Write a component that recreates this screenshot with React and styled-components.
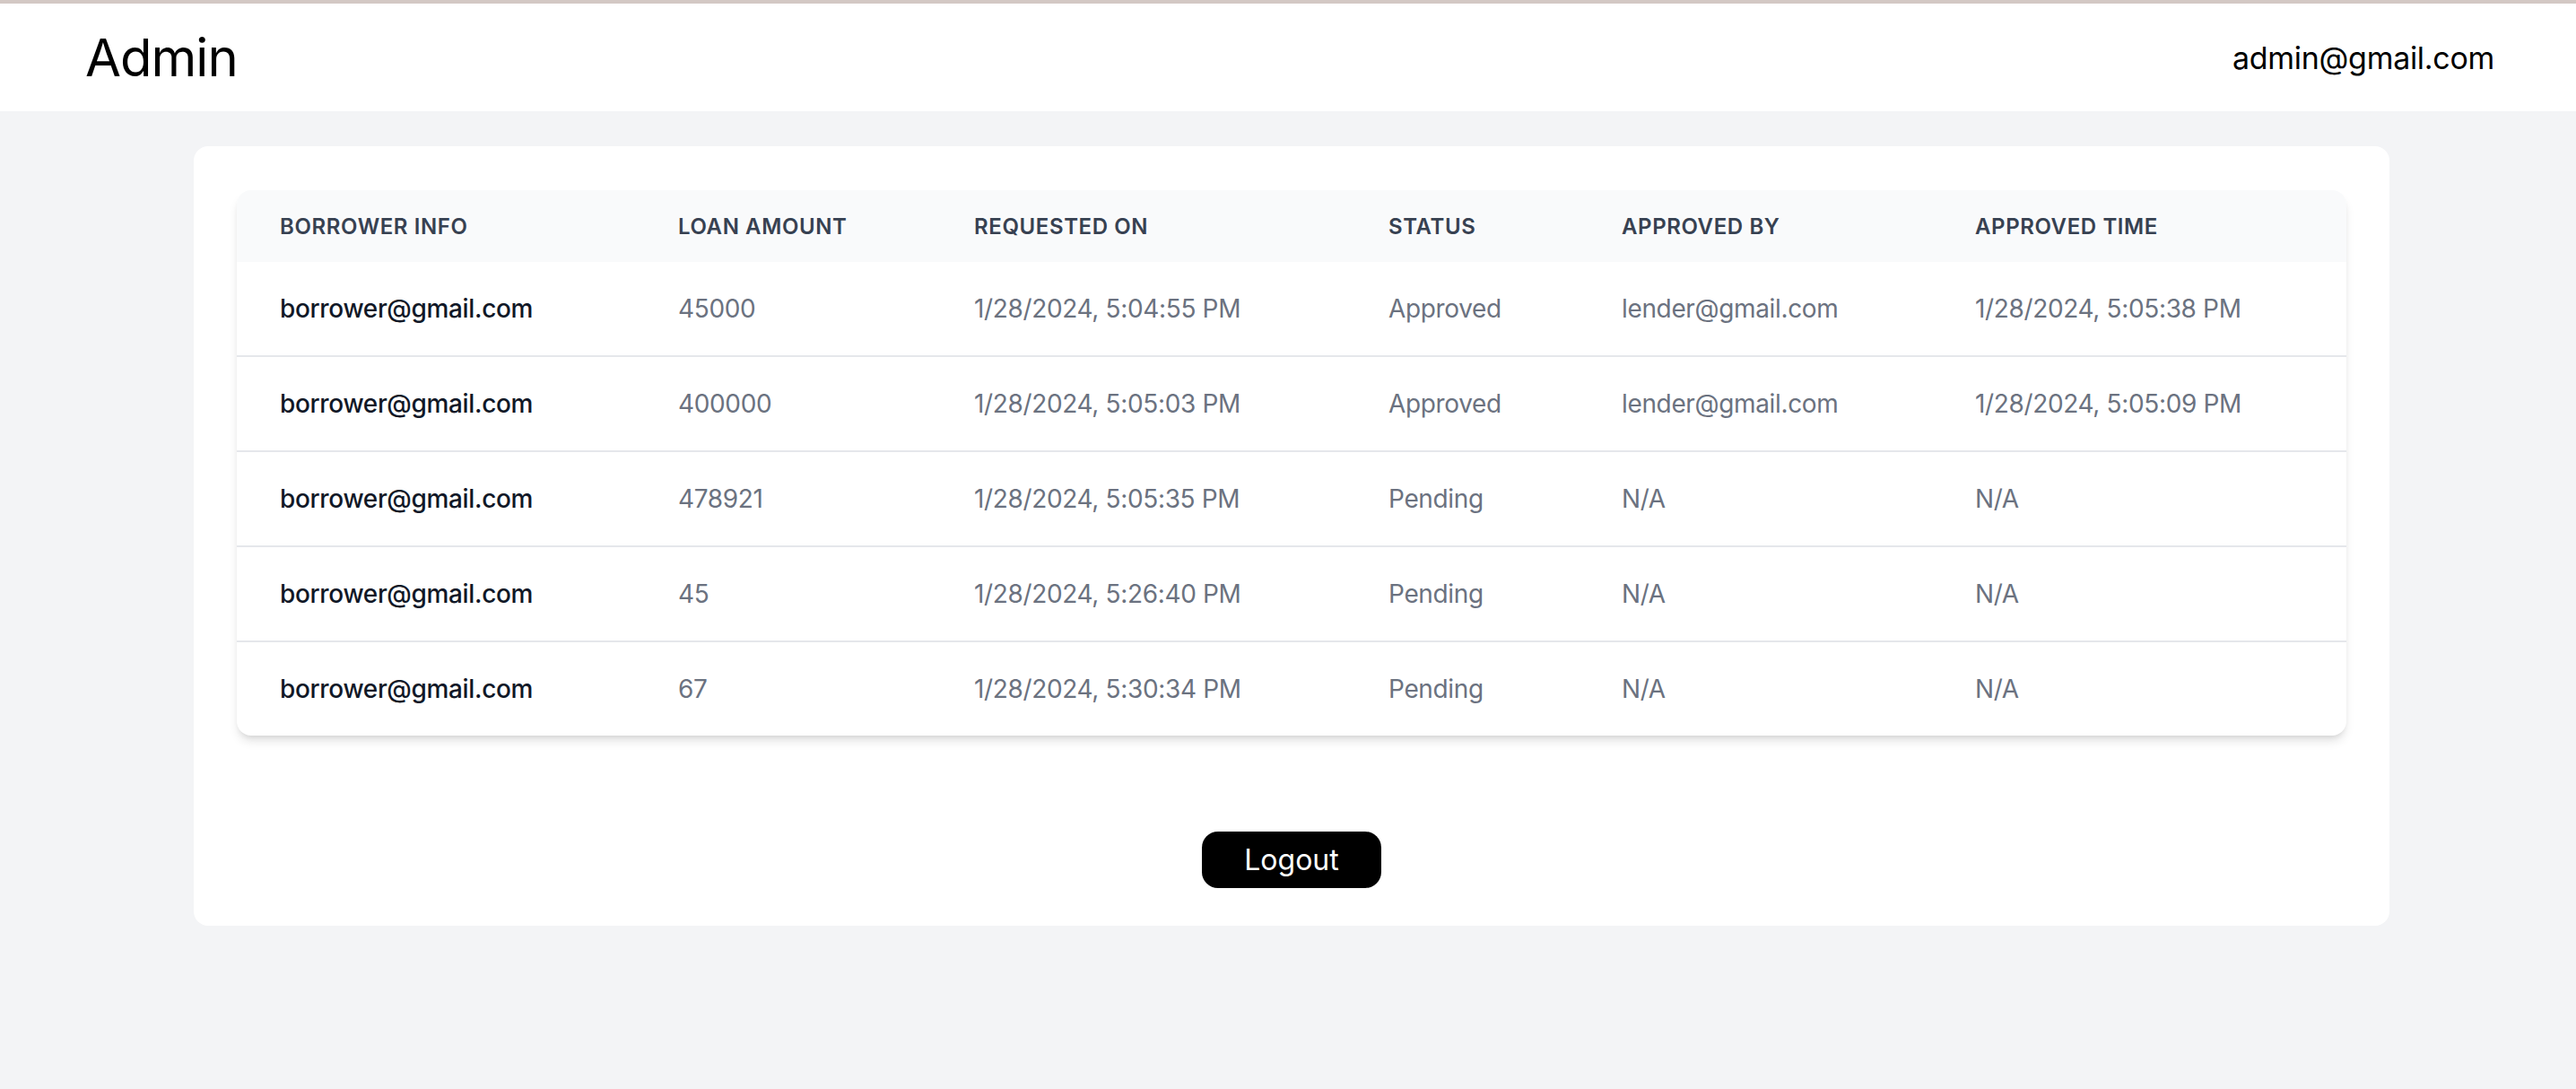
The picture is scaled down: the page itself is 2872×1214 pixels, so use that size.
import React from "react";
import styled, { createGlobalStyle } from "styled-components";

const Global = createGlobalStyle`
  html, body { margin: 0; padding: 0; }
  body {
    background: #f3f4f6;
    font-family: Inter, "Noto Sans", "Liberation Sans", sans-serif;
    min-height: 1214px;
  }
  * { box-sizing: border-box; }
`;

const TopBar = styled.header`
  display: flex;
  align-items: center;
  justify-content: space-between;
  height: 124px;
  background: #ffffff;
  border-top: 4px solid #d3c8c4;
  padding: 0 91px 0 95px;
`;

const Title = styled.h1`
  margin: 0;
  font-size: 58px;
  font-weight: 400;
  color: #000;
  letter-spacing: -1px;
`;

const UserEmail = styled.span`
  font-size: 34px;
  font-weight: 400;
  color: #000;
  letter-spacing: -0.3px;
`;

const Main = styled.main`
  padding: 39px 208px 0 216px;
`;

const Card = styled.section`
  background: #fff;
  border-radius: 16px;
  padding: 49px 48px 42px 48px;
  display: flex;
  flex-direction: column;
  align-items: center;
`;

const TableWrap = styled.div`
  width: 100%;
  border-radius: 16px;
  overflow: hidden;
  box-shadow: 0 8px 12px -2px rgba(0, 0, 0, 0.11), 0 4px 6px -3px rgba(0, 0, 0, 0.1);
`;

const Table = styled.table`
  width: 100%;
  border-collapse: separate;
  border-spacing: 0;
  table-layout: fixed;
`;

const HeadCell = styled.th`
  padding: 25px 48px 23px;
  line-height: 32px;
  background: #f9fafb;
  text-align: left;
  font-size: 24px;
  font-weight: 600;
  color: #374151;
  text-transform: uppercase;
  letter-spacing: 0.6px;
  white-space: nowrap;
`;

const Row = styled.tr`
  & + & td { border-top: 2px solid #e5e7eb; }
`;

const Cell = styled.td`
  padding: 32px 48px;
  font-size: 28px;
  line-height: 40px;
  letter-spacing: -0.35px;
  white-space: nowrap;
  color: ${(p) => (p.$primary ? "#111827" : "#6b7280")};
  font-weight: ${(p) => (p.$primary ? 500 : 400)};
`;

const LogoutButton = styled.button`
  margin-top: 107px;
  height: 63px;
  padding: 0 47px;
  background: #000;
  color: #fff;
  border: none;
  border-radius: 18px;
  font-family: inherit;
  font-size: 32px;
  font-weight: 400;
  cursor: pointer;
`;

const columns = [
  { label: "Borrower Info", width: 444 },
  { label: "Loan Amount", width: 330 },
  { label: "Requested On", width: 462 },
  { label: "Status", width: 260 },
  { label: "Approved By", width: 394 },
  { label: "Approved Time", width: 462 },
];

const rows = [
  ["borrower@gmail.com", "45000", "1/28/2024, 5:04:55 PM", "Approved", "lender@gmail.com", "1/28/2024, 5:05:38 PM"],
  ["borrower@gmail.com", "400000", "1/28/2024, 5:05:03 PM", "Approved", "lender@gmail.com", "1/28/2024, 5:05:09 PM"],
  ["borrower@gmail.com", "478921", "1/28/2024, 5:05:35 PM", "Pending", "N/A", "N/A"],
  ["borrower@gmail.com", "45", "1/28/2024, 5:26:40 PM", "Pending", "N/A", "N/A"],
  ["borrower@gmail.com", "67", "1/28/2024, 5:30:34 PM", "Pending", "N/A", "N/A"],
];

export default function App() {
  return (
    <>
      <Global />
      <TopBar>
        <Title>Admin</Title>
        <UserEmail>admin@gmail.com</UserEmail>
      </TopBar>
      <Main>
        <Card>
          <TableWrap>
            <Table>
              <colgroup>
                {columns.map((c) => (
                  <col key={c.label} style={{ width: c.width }} />
                ))}
              </colgroup>
              <thead>
                <tr>
                  {columns.map((c) => (
                    <HeadCell key={c.label}>{c.label}</HeadCell>
                  ))}
                </tr>
              </thead>
              <tbody>
                {rows.map((r, i) => (
                  <Row key={i}>
                    {r.map((v, j) => (
                      <Cell key={j} $primary={j === 0}>
                        {v}
                      </Cell>
                    ))}
                  </Row>
                ))}
              </tbody>
            </Table>
          </TableWrap>
          <LogoutButton>Logout</LogoutButton>
        </Card>
      </Main>
    </>
  );
}
